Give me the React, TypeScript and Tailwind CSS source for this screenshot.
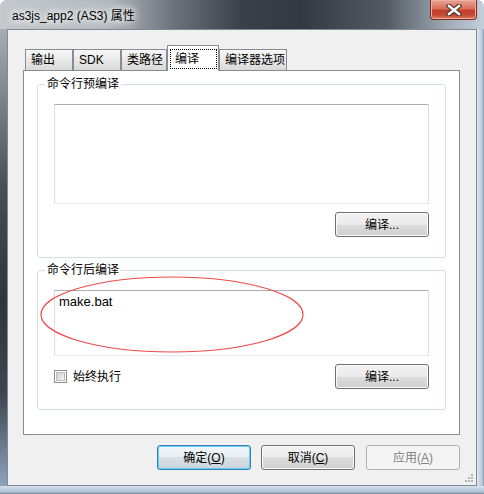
import React from "react";

const btnBase =
  "w-[94px] h-[25px] rounded-[3px] border flex items-center justify-center text-[12px] leading-[16px]";
const btnNormal =
  "border-[#707070] text-black shadow-[inset_0_0_0_1px_#fbfbfb] bg-[linear-gradient(to_bottom,#f2f2f2_0%,#ebebeb_50%,#dddddd_50%,#cfcfcf_100%)]";

function Tab({ label, w }: { label: string; w: string }) {
  return (
    <div
      className={`${w} h-[21px] border border-b-0 border-[#898c95] bg-linear-to-b from-[#f7f7f7] to-[#d9d9d9] flex items-center pl-[5px] text-[12px] leading-[16px] text-black`}
    >
      {label}
    </div>
  );
}

function TextBox({ h, children }: { h: string; children?: React.ReactNode }) {
  return (
    <div
      className={`w-full ${h} bg-white border border-t-[#abadb3] border-l-[#dbdfe6] border-r-[#dbdfe6] border-b-[#e3e9ef] pl-[4px] pt-[3px] text-[13px] leading-[16px] text-black`}
    >
      {children}
    </div>
  );
}

export default function App() {
  return (
    <div className="relative w-[484px] h-[494px] flex flex-col overflow-hidden rounded-t-[7px] bg-[#bccbdc] font-['Liberation_Sans','Noto_Sans_CJK_SC',sans-serif]">
      {/* title bar */}
      <div className="h-[29px] flex items-start bg-[linear-gradient(to_right,#c4c9ce_0%,#b3b9bf_22%,#6b727a_36%,#3a4048_50%,#333940_62%,#545b63_80%,#a3aeb9_93%,#c3cedb_100%)]">
        <span className="ml-[12px] mt-[8px] text-[12px] leading-[16px] text-black [text-shadow:0_0_6px_#ffffff,0_0_10px_#ffffff,0_0_14px_#ffffff]">
          as3js_app2 (AS3) 属性
        </span>
        <div className="ml-auto mr-[7px] w-[47px] h-[20px] rounded-b-[4px] border border-t-0 border-[#7a2a20] bg-[linear-gradient(to_bottom,#e9a493_0%,#d9705c_45%,#c3402b_55%,#c64a32_80%,#de7a5c_100%)] shadow-[inset_0_0_0_1px_#f0b0a0] flex items-center justify-center">
          <svg width="16" height="12" viewBox="0 0 16 12">
            <path d="M3 2 L13 10 M13 2 L3 10" stroke="#3a2a28" strokeWidth="4.6" strokeLinecap="square" />
            <path d="M3 2 L13 10 M13 2 L3 10" stroke="#ffffff" strokeWidth="2.6" strokeLinecap="square" />
          </svg>
        </div>
      </div>

      {/* body */}
      <div className="flex">
        <div className="w-[7px] h-[457px] bg-[linear-gradient(to_bottom,#a7adb3_0%,#7d848b_15%,#474d54_35%,#2f353b_60%,#3e4650_80%,#8fa3bd_100%)]" />
        <div className="relative w-[470px] h-[457px] bg-[#f0f0f0] border border-[#7f8a96] flex flex-col">
          {/* tabs */}
          <div className="ml-[17px] mt-[15px] h-[25px] flex items-end">
            <Tab label="输出" w="w-[48px]" />
            <Tab label="SDK" w="w-[48px]" />
            <Tab label="类路径" w="w-[46px]" />
            <div className="relative z-10 w-[52px] h-[26px] -mb-[1px] border border-b-0 border-[#898c95] bg-white pt-[3px] pl-[2px] pr-[1px]">
              <div className="h-[20px] border border-dotted border-black flex items-center pl-[4px] text-[12px] leading-[16px] text-black">
                编译
              </div>
            </div>
            <Tab label="编译器选项" w="w-[68px]" />
          </div>

          {/* tab page */}
          <div className="ml-[15px] w-[437px] h-[365px] border border-[#898c95] bg-white flex flex-col">
            {/* group 1 */}
            <div className="relative ml-[13px] mt-[13px] w-[409px] h-[174px] border border-[#d5dfe5] rounded-[3px]">
              <span className="absolute left-[7px] -top-[9px] px-[2px] bg-white text-[12px] leading-[16px] text-black">
                命令行预编译
              </span>
              <div className="ml-[16px] mt-[19px] w-[375px] flex flex-col items-end">
                <TextBox h="h-[100px]" />
                <div className={`${btnBase} ${btnNormal} mt-[8px]`}>编译...</div>
              </div>
            </div>

            {/* group 2 */}
            <div className="relative ml-[13px] mt-[12px] w-[409px] h-[140px] border border-[#d5dfe5] rounded-[3px]">
              <span className="absolute left-[7px] -top-[9px] px-[2px] bg-white text-[12px] leading-[16px] text-black">
                命令行后编译
              </span>
              <div className="ml-[16px] mt-[19px] w-[375px] flex flex-col">
                <TextBox h="h-[66px]">make.bat</TextBox>
                <div className="mt-[8px] h-[25px] flex items-center">
                  <div className="w-[13px] h-[13px] border border-[#8e8f8f] bg-white p-[1px]">
                    <div className="w-full h-full border border-[#b9bdc3] bg-linear-to-br from-[#cbcfd5] to-[#f4f5f6]" />
                  </div>
                  <span className="ml-[6px] text-[12px] leading-[16px] text-black">始终执行</span>
                  <div className={`${btnBase} ${btnNormal} ml-auto`}>编译...</div>
                </div>
              </div>
            </div>
          </div>

          {/* dialog buttons */}
          <div className="mt-[10px] ml-[149px] flex">
            <div className={`${btnBase} border-[#3c7fb1] text-black shadow-[inset_0_0_0_1px_#5fd0f5] bg-[linear-gradient(to_bottom,#f0f6fa_0%,#e8eef2_50%,#d9e1e7_50%,#cdd5dc_100%)]`}>
              确定(<span className="underline">O</span>)
            </div>
            <div className={`${btnBase} ${btnNormal} ml-[10px]`}>
              取消(<span className="underline">C</span>)
            </div>
            <div className={`${btnBase} ml-[11px] border-[#adb2b5] bg-[#f4f4f4] text-[#838383]`}>
              应用(<span className="underline">A</span>)
            </div>
          </div>

          {/* size grip */}
          <svg className="absolute right-[2px] bottom-[2px]" width="10" height="10" viewBox="0 0 10 10">
            <rect x="7" y="1" width="2" height="2" fill="#b0b4b8" />
            <rect x="4" y="4" width="2" height="2" fill="#b0b4b8" />
            <rect x="7" y="4" width="2" height="2" fill="#b0b4b8" />
            <rect x="1" y="7" width="2" height="2" fill="#b0b4b8" />
            <rect x="4" y="7" width="2" height="2" fill="#b0b4b8" />
            <rect x="7" y="7" width="2" height="2" fill="#b0b4b8" />
          </svg>
        </div>
        <div className="w-[7px] h-[457px] bg-[linear-gradient(to_right,#dfe8f1_0%,#c5d4e4_40%,#b4c5d8_80%,#7d8a98_100%)]" />
      </div>
      <div className="h-[8px] bg-[linear-gradient(to_bottom,#d6e1ec_0%,#bccbdc_50%,#a9b9cb_80%,#6f7c8a_100%)]" />

      {/* red annotation ellipse */}
      <svg className="absolute left-[40px] top-[276px]" width="265" height="78" viewBox="0 0 265 78">
        <ellipse cx="132" cy="38.5" rx="131" ry="37.5" fill="none" stroke="#ee4a4a" strokeWidth="1.2" />
      </svg>
    </div>
  );
}
